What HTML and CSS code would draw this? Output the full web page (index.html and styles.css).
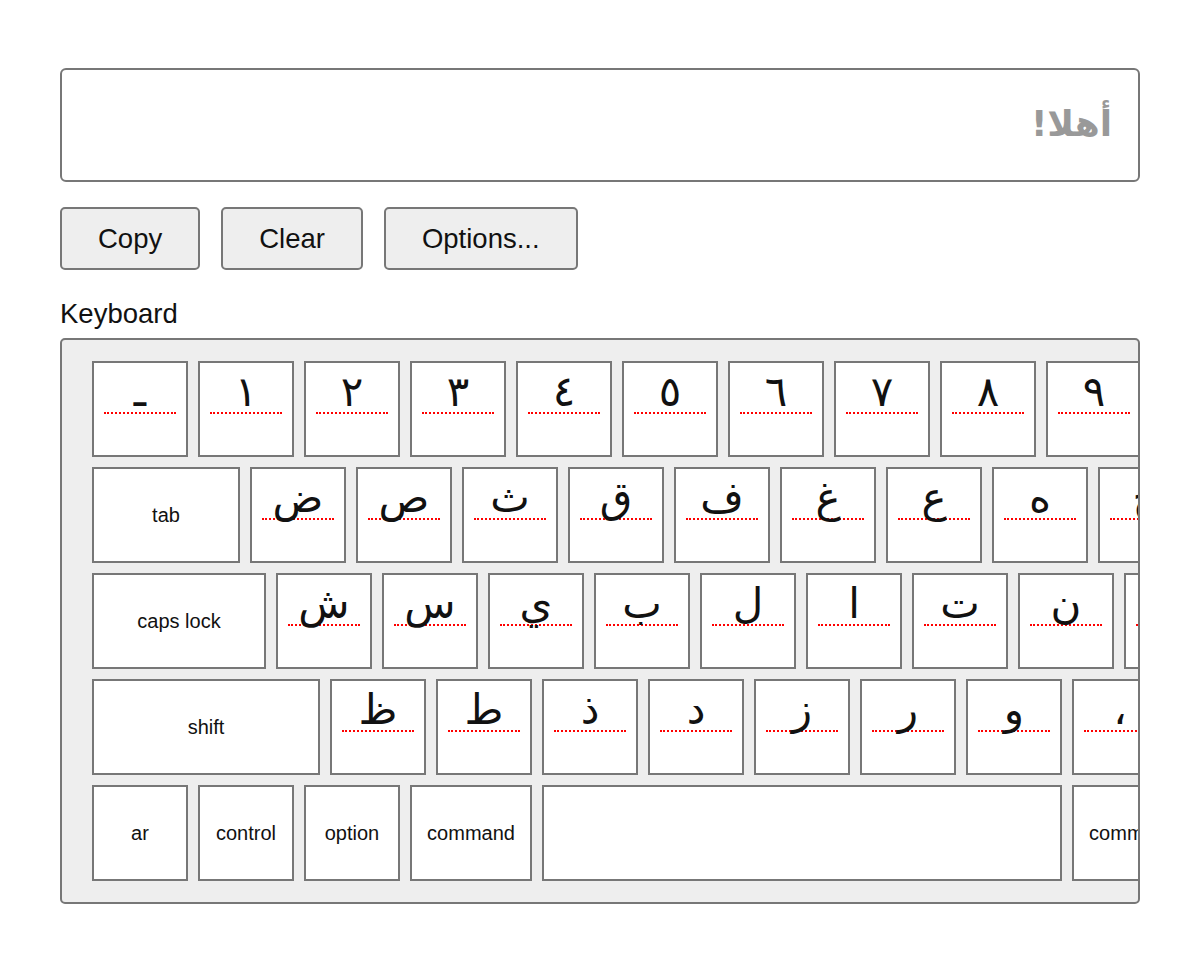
FILE: index.html
```html
<!DOCTYPE html>
<html lang="en">
<head>
    <meta charset="UTF-8">
    <meta name="viewport" content="width=device-width, initial-scale=1.0">
    <title>Arabic Keyboard</title>
    <link rel="stylesheet" href="styles.css">
</head>
<body>
    <textarea id="output" class="output" dir="rtl" placeholder="أهلا!"></textarea>

    <div class="actions">
        <button id="copyBtn">Copy</button>
        <button id="clearBtn">Clear</button>
        <button id="optionsBtn">Options...</button>
    </div>

    <div class="kb-title">Keyboard</div>
    <div class="keyboard">
        <div class="row">
            <div class="key"><span class="glyph">ـ</span></div>
            <div class="key"><span class="glyph">١</span></div>
            <div class="key"><span class="glyph">٢</span></div>
            <div class="key"><span class="glyph">٣</span></div>
            <div class="key"><span class="glyph">٤</span></div>
            <div class="key"><span class="glyph">٥</span></div>
            <div class="key"><span class="glyph">٦</span></div>
            <div class="key"><span class="glyph">٧</span></div>
            <div class="key"><span class="glyph">٨</span></div>
            <div class="key"><span class="glyph">٩</span></div>
        </div>
        <div class="row">
            <div class="key special w-tab">tab</div>
            <div class="key"><span class="glyph">ض</span></div>
            <div class="key"><span class="glyph">ص</span></div>
            <div class="key"><span class="glyph">ث</span></div>
            <div class="key"><span class="glyph">ق</span></div>
            <div class="key"><span class="glyph">ف</span></div>
            <div class="key"><span class="glyph">غ</span></div>
            <div class="key"><span class="glyph">ع</span></div>
            <div class="key"><span class="glyph">ه</span></div>
            <div class="key"><span class="glyph">خ</span></div>
        </div>
        <div class="row">
            <div class="key special w-caps">caps lock</div>
            <div class="key"><span class="glyph">ش</span></div>
            <div class="key"><span class="glyph">س</span></div>
            <div class="key"><span class="glyph">ي</span></div>
            <div class="key"><span class="glyph">ب</span></div>
            <div class="key"><span class="glyph">ل</span></div>
            <div class="key"><span class="glyph">ا</span></div>
            <div class="key"><span class="glyph">ت</span></div>
            <div class="key"><span class="glyph">ن</span></div>
            <div class="key"><span class="glyph">م</span></div>
        </div>
        <div class="row">
            <div class="key special w-shift">shift</div>
            <div class="key"><span class="glyph">ظ</span></div>
            <div class="key"><span class="glyph">ط</span></div>
            <div class="key"><span class="glyph">ذ</span></div>
            <div class="key"><span class="glyph">د</span></div>
            <div class="key"><span class="glyph">ز</span></div>
            <div class="key"><span class="glyph">ر</span></div>
            <div class="key"><span class="glyph">و</span></div>
            <div class="key"><span class="glyph">،</span></div>
        </div>
        <div class="row">
            <div class="key special">ar</div>
            <div class="key special">control</div>
            <div class="key special">option</div>
            <div class="key special w-cmd">command</div>
            <div class="key special w-space"></div>
            <div class="key special w-cmd">command</div>
        </div>
    </div>

    <script>
        const output = document.getElementById('output');

        document.querySelectorAll('.glyph').forEach(g => {
            g.parentElement.addEventListener('click', () => {
                output.value += g.textContent;
            });
        });

        document.getElementById('copyBtn').onclick = () => {
            output.select();
            document.execCommand('copy');
        };

        document.getElementById('clearBtn').onclick = () => {
            output.value = '';
        };
    </script>
</body>
</html>
```

FILE: styles.css
```css
* {
    box-sizing: border-box;
}

body {
    margin: 0;
    padding: 68px 60px;
    font-family: "Liberation Sans", Arial, sans-serif;
    color: #111;
}

.output {
    display: block;
    width: 100%;
    height: 114px;
    padding: 33px 26px 20px;
    border: 2px solid #777;
    border-radius: 6px;
    font-family: "DejaVu Sans", sans-serif;
    font-size: 36px;
    font-weight: bold;
    resize: none;
}

.output::placeholder {
    color: #999;
}

.actions {
    display: flex;
    gap: 21px;
    margin-top: 25px;
}

button {
    padding: 14px 36px;
    font-family: "Liberation Sans", Arial, sans-serif;
    font-size: 27.5px;
    line-height: 31px;
    color: #111;
    background-color: #eee;
    border: 2px solid #777;
    border-radius: 5px;
    cursor: pointer;
}

.kb-title {
    margin-top: 28px;
    margin-bottom: 8px;
    font-size: 27.5px;
}

.keyboard {
    display: flex;
    flex-direction: column;
    gap: 10px;
    padding: 21px 30px 21px;
    background-color: #eee;
    border: 2px solid #777;
    border-radius: 5px;
    overflow: hidden;
}

.row {
    display: flex;
    gap: 10px;
}

.key {
    flex: none;
    display: flex;
    flex-direction: column;
    align-items: center;
    width: 96px;
    height: 96px;
    background-color: #fff;
    border: 2px solid #777;
}

.glyph {
    display: flex;
    align-items: flex-end;
    justify-content: center;
    width: 72px;
    height: 51px;
    border-bottom: 2px dotted red;
    font-family: "DejaVu Sans", sans-serif;
    font-size: 42px;
    line-height: 0.95;
    color: #111;
}

.special {
    justify-content: center;
    font-size: 20px;
}

.w-tab { width: 148px; }
.w-caps { width: 174px; }
.w-shift { width: 228px; }
.w-cmd { width: 122px; }
.w-space { width: 520px; }
```
